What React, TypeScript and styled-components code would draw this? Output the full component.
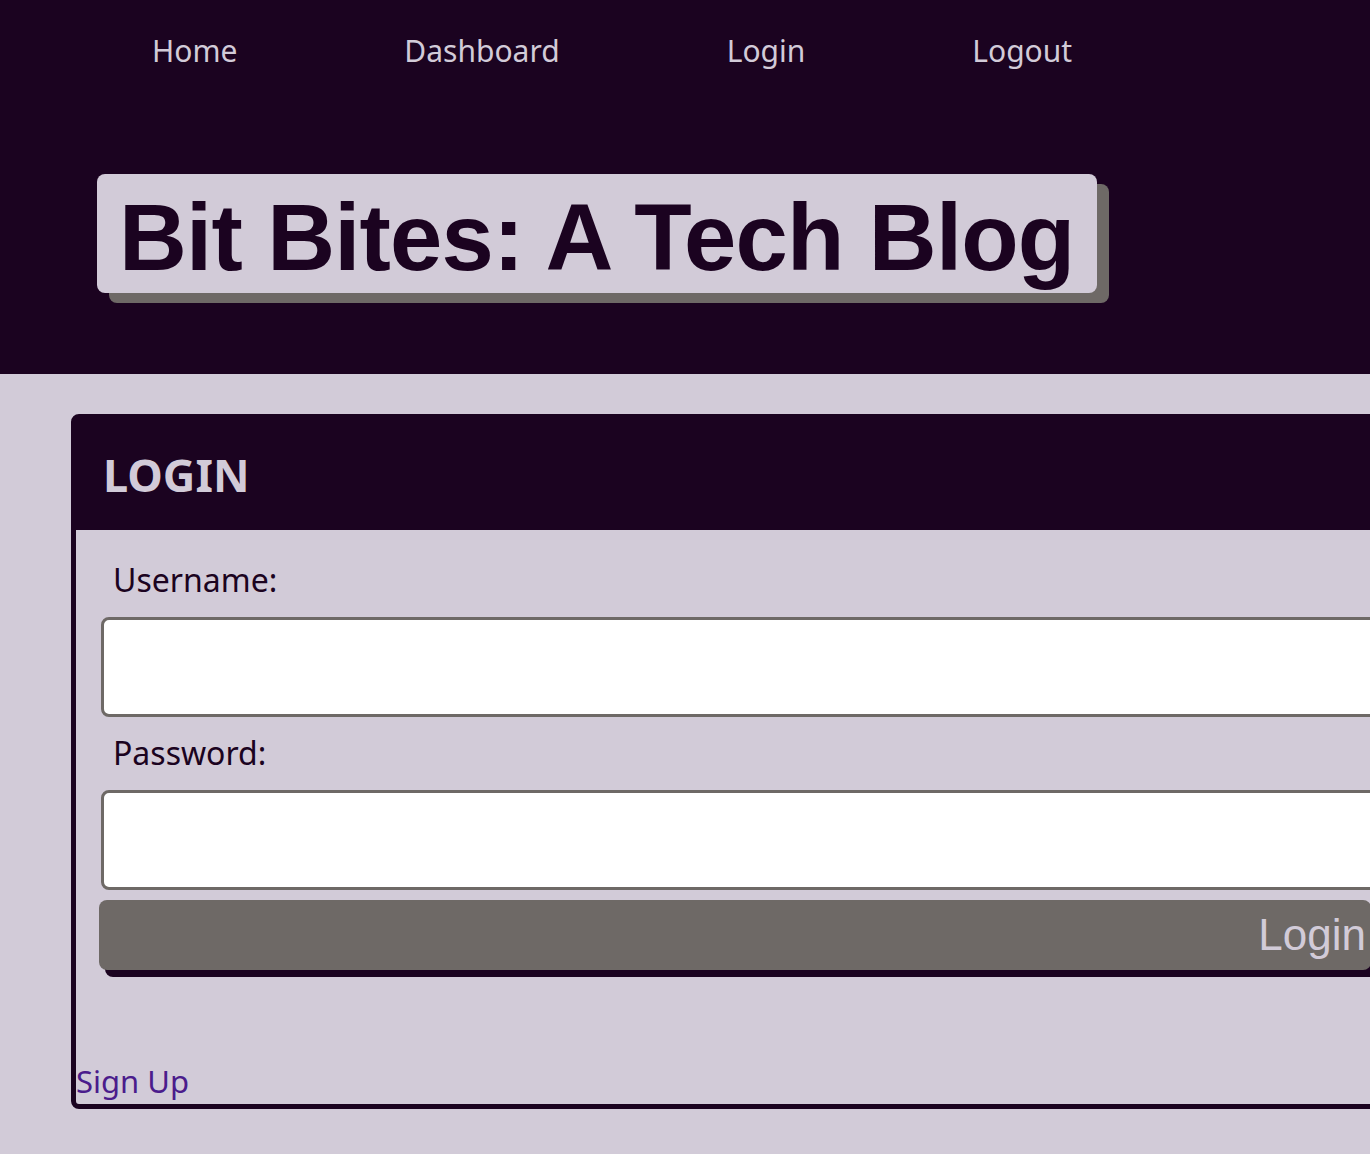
import React from "react";
import styled, { createGlobalStyle } from "styled-components";

const dark = "#1b0320";
const light = "#d2cbd8";
const gray = "#6e6966";

const GlobalStyle = createGlobalStyle`
  body {
    margin: 0;
    background: ${light};
    font-family: "Noto Sans", "Open Sans", sans-serif;
    overflow-x: hidden;
  }
`;

const Header = styled.header`
  height: 374px;
  background: ${dark};
  display: flex;
  flex-direction: column;
`;

const Nav = styled.nav`
  display: flex;
  gap: 167px;
  padding: 28px 0 0 152px;
`;

const NavLink = styled.a`
  color: ${light};
  font-size: 30px;
  line-height: 46px;
  text-decoration: none;
`;

const TitleWrap = styled.div`
  padding: 100px 0 0 97px;
  display: flex;
`;

const Title = styled.h1`
  margin: 0;
  background: ${light};
  color: ${dark};
  border-radius: 8px;
  box-shadow: 12px 10px 0 ${gray};
  padding: 4px 22px 0 22px;
  height: 115px;
  font-family: "Liberation Sans", Arial, sans-serif;
  font-weight: 700;
  font-size: 94px;
  line-height: 119px;
  letter-spacing: -0.8px;
  white-space: nowrap;
`;

const Main = styled.main`
  padding: 40px 0 40px 71px;
`;

const Card = styled.section`
  width: 1318px;
  border: 5px solid ${dark};
  border-radius: 8px;
  background: ${light};
`;

const CardHeader = styled.div`
  background: ${dark};
  height: 111px;
  display: flex;
  align-items: center;
  padding-left: 27px;
  color: ${light};
  font-size: 45px;
  font-weight: 700;
`;

const Form = styled.form`
  display: flex;
  flex-direction: column;
  padding: 30px 0 0 23px;
`;

const Label = styled.label`
  color: ${dark};
  font-size: 32px;
  line-height: 40px;
  margin-left: 14px;
`;

const Input = styled.input`
  box-sizing: border-box;
  height: 100px;
  margin: 17px 0 16px 2px;
  border: 3px solid ${gray};
  border-radius: 8px;
  background: #fff;
  font-size: 30px;
`;

const Button = styled.button`
  height: 70px;
  margin: -6px 23px 0 0;
  border: none;
  border-radius: 8px;
  background: ${gray};
  box-shadow: 6px 7px 0 ${dark};
  color: ${light};
  font-family: "Liberation Sans", Arial, sans-serif;
  font-size: 44px;
  text-align: right;
  padding: 0 5px 0 0;
`;

const SignUp = styled.a`
  display: block;
  margin-top: 91px;
  padding-bottom: 3px;
  color: #4b1c8c;
  font-size: 31px;
  line-height: 40px;
  text-decoration: none;
`;

export default function App() {
  return (
    <>
      <GlobalStyle />
      <Header>
        <Nav>
          <NavLink href="#">Home</NavLink>
          <NavLink href="#">Dashboard</NavLink>
          <NavLink href="#">Login</NavLink>
          <NavLink href="#">Logout</NavLink>
        </Nav>
        <TitleWrap>
          <Title>Bit Bites: A Tech Blog</Title>
        </TitleWrap>
      </Header>
      <Main>
        <Card>
          <CardHeader>LOGIN</CardHeader>
          <Form onSubmit={(e) => e.preventDefault()}>
            <Label htmlFor="username">Username:</Label>
            <Input id="username" type="text" />
            <Label htmlFor="password">Password:</Label>
            <Input id="password" type="password" />
            <Button type="submit">Login</Button>
          </Form>
          <SignUp href="#">Sign Up</SignUp>
        </Card>
      </Main>
    </>
  );
}
